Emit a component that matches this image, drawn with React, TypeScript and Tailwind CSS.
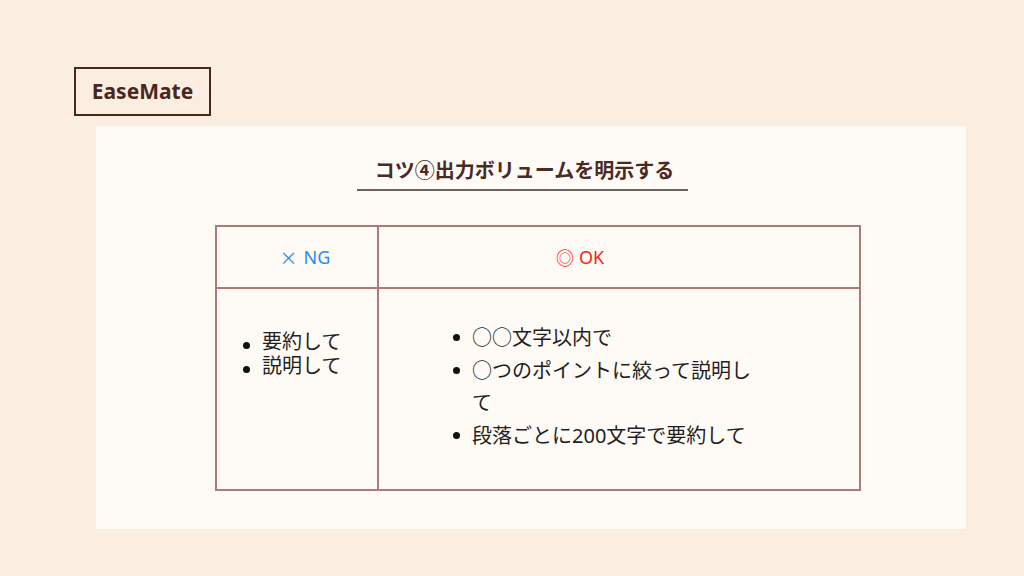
const FONT = { fontFamily: '"Noto Sans", "Noto Sans CJK JP", sans-serif' };
const CJK = { fontFamily: '"Noto Sans CJK JP", sans-serif' };

const ngItems = ["要約して", "説明して"];
const okItems = ["○○文字以内で", "○つのポイントに絞って説明して", "段落ごとに200文字で要約して"];

function Bullet({ text }: { text: string }) {
  return (
    <li className="flex">
      <span className="flex w-[18px] shrink-0 -ml-[18px] items-start">
        <span className="mt-[0.6em] ml-[-1px] h-[7px] w-[7px] rounded-full bg-[#111]" />
      </span>
      <span>{text}</span>
    </li>
  );
}

export default function App() {
  return (
    <div className="h-[576px] w-[1024px] bg-[#fbeee1] pt-[67px] pl-[74px]" style={FONT}>
      <div className="flex h-[49px] w-[137px] items-center justify-center border-2 border-[#4b2620] text-[21px] font-bold text-[#4b2620]">
        EaseMate
      </div>

      <div className="mt-[10px] ml-[22px] flex h-[403px] w-[870px] flex-col bg-[#fefaf5] pt-[31px]">
        <div className="ml-[261px] w-[331px] border-b-2 border-[#6a6260] pb-[4px] pl-[4px] text-center text-[20px] leading-[28px] font-bold text-[#4a2a24]">
          コツ④出力ボリュームを明示する
        </div>

        <div className="mt-[34px] ml-[119px] w-[646px] border-2 border-[#ad7a78] text-[#1f1f1f]">
          <div className="flex h-[62px] border-b-2 border-[#ad7a78]">
            <div className="flex w-[162px] items-center justify-center gap-[6px] border-r-2 border-[#ad7a78] pl-[16px] text-[18px] text-[#2a8cf0]">
              <span style={CJK}>×</span>
              <span>NG</span>
            </div>
            <div className="flex flex-1 items-center justify-center gap-[5px] pr-[78px] text-[18px] text-[#ff1a1a]">
              <span style={CJK}>◎</span>
              <span>OK</span>
            </div>
          </div>
          <div className="flex h-[200px]">
            <div className="w-[162px] border-r-2 border-[#ad7a78] pt-[41px] pl-[45px]">
              <ul className="text-[20px] leading-[24px]">
                {ngItems.map((t) => (
                  <Bullet key={t} text={t} />
                ))}
              </ul>
            </div>
            <div className="flex-1 pt-[33px] pl-[93px]">
              <ul className="w-[292px] text-[20px] leading-[32.5px]">
                {okItems.map((t) => (
                  <Bullet key={t} text={t} />
                ))}
              </ul>
            </div>
          </div>
        </div>
      </div>
    </div>
  );
}
